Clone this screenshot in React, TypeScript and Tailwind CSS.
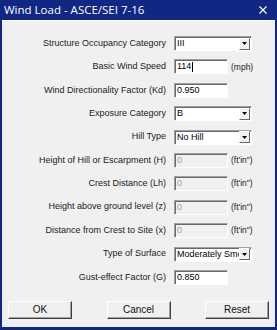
import React from 'react';

type Row = {
  label: string;
  kind: 'select' | 'text' | 'disabled';
  value: string;
  unit?: string;
  caret?: boolean;
};

const ROWS: Row[] = [
  { label: 'Structure Occupancy Category', kind: 'select', value: 'III' },
  { label: 'Basic Wind Speed', kind: 'text', value: '114', unit: '(mph)', caret: true },
  { label: 'Wind Directionality Factor (Kd)', kind: 'text', value: '0.950' },
  { label: 'Exposure Category', kind: 'select', value: 'B' },
  { label: 'Hill Type', kind: 'select', value: 'No Hill' },
  { label: 'Height of Hill or Escarpment (H)', kind: 'disabled', value: '0', unit: '(ft\'in")' },
  { label: 'Crest Distance (Lh)', kind: 'disabled', value: '0', unit: '(ft\'in")' },
  { label: 'Height above ground level (z)', kind: 'disabled', value: '0', unit: '(ft\'in")' },
  { label: 'Distance from Crest to Site (x)', kind: 'disabled', value: '0', unit: '(ft\'in")' },
  { label: 'Type of Surface', kind: 'select', value: 'Moderately Smooth' },
  { label: 'Gust-effect Factor (G)', kind: 'text', value: '0.850' },
];

const sunken =
  'border border-t-[#a0a0a0] border-l-[#a0a0a0] border-b-white border-r-white shadow-[inset_1px_1px_0_#696969]';

function Control({ row }: { row: Row }) {
  if (row.kind === 'select') {
    return (
      <div className={`relative flex h-[15px] w-[78px] items-center overflow-hidden bg-white ${sunken}`}>
        <span className="flex-1 overflow-hidden whitespace-nowrap pl-[2px] leading-none text-black">
          {row.value}
        </span>
        <div className="mr-[1px] flex h-[12px] w-[11px] shrink-0 items-center justify-center border border-t-white border-l-white border-b-[#696969] border-r-[#696969] bg-[#f0f0f0]">
          <svg width="5" height="3" viewBox="0 0 5 3">
            <path d="M0 0h5L2.5 3z" fill="#000" />
          </svg>
        </div>
      </div>
    );
  }
  const disabled = row.kind === 'disabled';
  return (
    <div
      className={`flex h-[15px] w-[54px] items-center ${sunken} ${
        disabled ? 'bg-[#f0f0f0] text-[#a0a0a0]' : 'bg-white text-black'
      }`}>
      <span className="pl-[2px] leading-none">{row.value}</span>
      {row.caret && <span className="ml-[1px] h-[10px] w-px bg-black" />}
    </div>
  );
}

function DialogButton({ children }: { children: React.ReactNode }) {
  return (
    <button className="flex h-[18px] w-[64px] items-center justify-center border border-t-white border-l-white border-b-[#404040] border-r-[#404040] bg-[#f0f0f0] text-[10px] text-[#111] shadow-[inset_-1px_-1px_0_#a0a0a0]">
      {children}
    </button>
  );
}

export default function App() {
  return (
    <div
      className="flex h-[330px] w-[277px] flex-col bg-[#102783] px-[2px] pb-[3px]"
      style={{ fontFamily: '"Liberation Sans", Arial, sans-serif' }}>
      <div className="flex h-[20px] shrink-0 items-center justify-between pl-[2px] pr-[8px]">
        <span
          className="text-[11.5px] leading-none text-white"
          style={{ fontFamily: '"Open Sans", "Noto Sans", sans-serif' }}>
          Wind Load - ASCE/SEI 7-16
        </span>
        <svg width="8" height="8" viewBox="0 0 8 8">
          <path d="M0.5 0.5l7 7M7.5 0.5l-7 7" stroke="#fff" strokeWidth="1.2" />
        </svg>
      </div>
      <div className="flex flex-1 flex-col border-t border-t-white bg-[#f0f0f0] pt-[15px] text-[9px] text-[#1a1a1a]">
        <div className="flex flex-col gap-y-[8.4px]">
          {ROWS.map((row) => (
            <div key={row.label} className="flex h-[15px] items-center">
              <span className="w-[164px] shrink-0 whitespace-nowrap text-right">{row.label}</span>
              <div className="ml-[8px]">
                <Control row={row} />
              </div>
              {row.unit && <span className="ml-[3px] text-[8.5px]">{row.unit}</span>}
            </div>
          ))}
        </div>
        <div className="mt-[16px] flex justify-between pl-[6px] pr-[6px]">
          <DialogButton>OK</DialogButton>
          <DialogButton>Cancel</DialogButton>
          <DialogButton>Reset</DialogButton>
        </div>
      </div>
    </div>
  );
}
